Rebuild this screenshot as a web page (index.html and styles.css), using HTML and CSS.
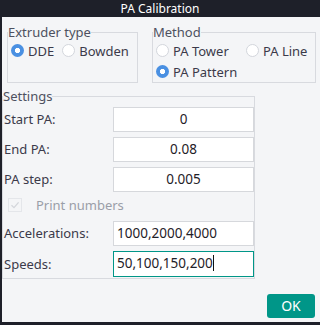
FILE: index.html
```html
<!DOCTYPE html>
<html>
<head>
<meta charset="utf-8">
<link rel="stylesheet" href="styles.css">
</head>
<body>
<div class="window">
  <div class="titlebar">PA Calibration</div>
  <div class="content">
    <div class="toprow">
      <fieldset class="group extruder">
        <legend>Extruder type</legend>
        <div class="radios">
          <div class="radio-item"><span class="radio checked"></span><span>DDE</span></div>
          <div class="radio-item"><span class="radio"></span><span>Bowden</span></div>
        </div>
      </fieldset>
      <fieldset class="group method">
        <legend>Method</legend>
        <div class="method-grid">
          <div class="radio-item"><span class="radio"></span><span>PA Tower</span></div>
          <div class="radio-item"><span class="radio"></span><span>PA Line</span></div>
          <div class="radio-item"><span class="radio checked"></span><span>PA Pattern</span></div>
        </div>
      </fieldset>
    </div>
    <fieldset class="group settings">
      <legend>Settings</legend>
      <div class="form">
        <div class="label">Start PA:</div>
        <div class="field center">0</div>
        <div class="label">End PA:</div>
        <div class="field center">0.08</div>
        <div class="label">PA step:</div>
        <div class="field center">0.005</div>
        <div class="check-row">
          <span class="checkbox"><svg width="12" height="12" viewBox="0 0 12 12"><path d="M2.5 6.2 L5 8.6 L9.6 3.4" fill="none" stroke="#d3d6db" stroke-width="1.3"/></svg></span>
          <span class="check-label">Print numbers</span>
        </div>
        <div class="label">Accelerations:</div>
        <div class="field">1000,2000,4000</div>
        <div class="label">Speeds:</div>
        <div class="field focused">50,100,150,200<span class="caret"></span></div>
      </div>
    </fieldset>
    <div class="footer">
      <div class="ok-btn">OK</div>
    </div>
  </div>
</div>
</body>
</html>
```
FILE: styles.css
```css
* { box-sizing: border-box; }
html, body { margin: 0; padding: 0; }
body {
  width: 320px;
  height: 325px;
  font-family: "Noto Sans", "DejaVu Sans", sans-serif;
  font-size: 13px;
  color: #3b3a4a;
  background: #1e2029;
}
.window {
  width: 320px;
  height: 325px;
  display: flex;
  flex-direction: column;
}
.titlebar {
  height: 17px;
  background: #1e2029;
  color: #ffffff;
  font-size: 12px;
  line-height: 17px;
  text-align: center;
}
.content {
  height: 305px;
  margin-left: 2px;
  background: #f4f5f7;
  display: flex;
  flex-direction: column;
}
.toprow {
  display: flex;
  padding: 8px 4px 0 5px;
  gap: 14px;
}
.group {
  margin: 0;
  border: 1px solid #d8dadf;
  padding: 4px 3px 3px 3px;
  min-width: 0;
}
.group legend {
  padding: 0;
  margin-left: -3px;
  line-height: 14px;
  color: #4e5160;
  font-size: 13px;
}
.extruder { width: 131px; }
.method { width: 164px; }
.radios {
  display: flex;
  gap: 8px;
}
.radio-item {
  display: flex;
  align-items: center;
  gap: 4px;
  height: 15px;
  white-space: nowrap;
}
.radio {
  width: 13px;
  height: 13px;
  border-radius: 50%;
  border: 1px solid #d3d6dc;
  background: #ffffff;
  flex: none;
}
.radio.checked {
  border: none;
  background: radial-gradient(circle, #ffffff 0 2.4px, #4a90e2 2.9px);
}
.method-grid {
  display: grid;
  grid-template-columns: 90px auto;
  row-gap: 6px;
}
.settings {
  margin: 6px 0 0 0;
  width: 253px;
  padding: 4px 0 1px 1px;
}
.settings legend { margin-left: -1px; }
.form {
  display: grid;
  grid-template-columns: 109px 141px;
  row-gap: 5px;
  align-items: center;
}
.label {
  line-height: 25px;
}
.field {
  height: 25px;
  background: #ffffff;
  border: 1px solid #d6d8dc;
  padding: 0 3px;
  line-height: 23px;
  color: #1f2128;
  font-size: 13.5px;
  white-space: nowrap;
}
.field.center { text-align: center; }
.field.focused {
  border-color: #009688;
  height: 26px;
}
.caret {
  display: inline-block;
  width: 1px;
  height: 16px;
  background: #111111;
  vertical-align: -3px;
}
.check-row {
  grid-column: 1 / 3;
  display: flex;
  align-items: center;
  height: 19px;
  padding-left: 4px;
}
.checkbox {
  width: 14px;
  height: 14px;
  border: 1px solid #e4e6ea;
  background: #f4f5f7;
  display: flex;
  align-items: center;
  justify-content: center;
  margin-top: -4px;
}
.check-label {
  margin-left: 14px;
  color: #9a9ea8;
  margin-top: -4px;
}
.footer {
  display: flex;
  justify-content: flex-end;
  padding: 15px 5px 0 0;
}
.ok-btn {
  width: 48px;
  height: 24px;
  background: #009688;
  color: #ffffff;
  border-radius: 3px;
  font-size: 14px;
  line-height: 24px;
  text-align: center;
}
```
